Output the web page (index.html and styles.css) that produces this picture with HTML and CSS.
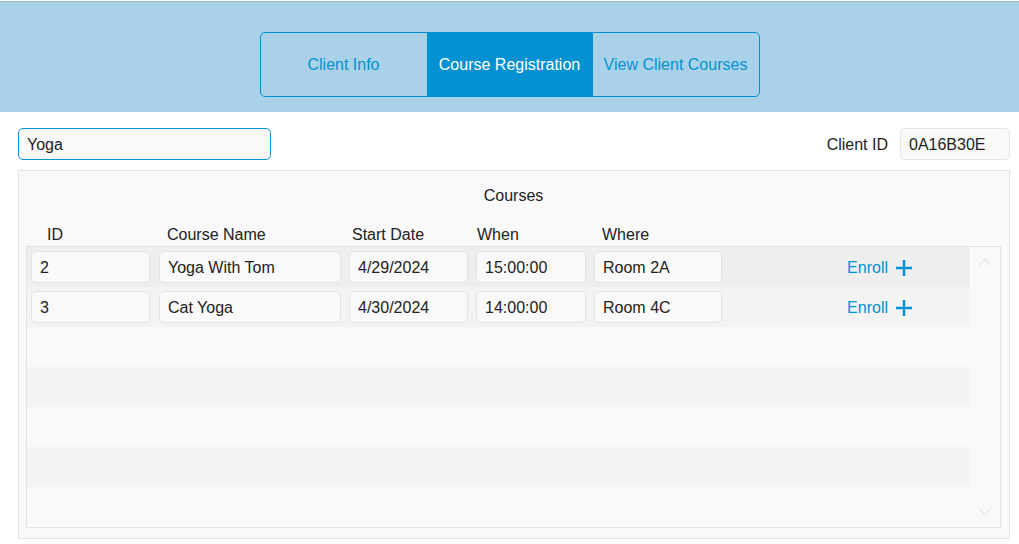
FILE: index.html
```html
<!DOCTYPE html>
<html lang="en">
<head>
<meta charset="utf-8">
<meta name="viewport" content="width=device-width, initial-scale=1">
<title>Course Registration</title>
<link rel="stylesheet" href="styles.css">
</head>
<body>
<header class="topbar">
  <nav class="tabs" aria-label="Sections">
    <button class="tab" type="button">Client Info</button>
    <button class="tab tab-active" type="button" aria-current="page">Course Registration</button>
    <button class="tab" type="button">View Client Courses</button>
  </nav>
</header>
<main class="content">
  <div class="toolbar">
    <input class="field search" type="text" value="Yoga" aria-label="Search courses">
    <div class="client">
      <label class="client-label" for="client-id">Client ID</label>
      <input class="field client-id" id="client-id" type="text" value="0A16B30E" readonly>
    </div>
  </div>
  <section class="panel">
    <h1 class="panel-title">Courses</h1>
    <div class="portal">
      <table class="courses">
        <thead class="head">
          <tr class="row head-row">
            <th class="label label-id">ID</th>
            <th class="label label-name">Course Name</th>
            <th class="label label-date">Start Date</th>
            <th class="label label-when">When</th>
            <th class="label label-name">Where</th>
            <th class="label"></th>
          </tr>
        </thead>
        <tbody class="body">
          <tr class="row row-current">
            <td><input class="field" type="text" value="2" aria-label="ID" readonly></td>
            <td><input class="field" type="text" value="Yoga With Tom" aria-label="Course Name" readonly></td>
            <td><input class="field" type="text" value="4/29/2024" aria-label="Start Date" readonly></td>
            <td><input class="field" type="text" value="15:00:00" aria-label="When" readonly></td>
            <td><input class="field" type="text" value="Room 2A" aria-label="Where" readonly></td>
            <td class="action"><button class="enroll" type="button">Enroll<svg class="plus" viewBox="0 0 16 16" aria-hidden="true"><path class="plus-edge" d="M8 0V16M0 8H16"/><path d="M8 0V16M0 8H16"/></svg></button></td>
          </tr>
          <tr class="row row-alt">
            <td><input class="field" type="text" value="3" aria-label="ID" readonly></td>
            <td><input class="field" type="text" value="Cat Yoga" aria-label="Course Name" readonly></td>
            <td><input class="field" type="text" value="4/30/2024" aria-label="Start Date" readonly></td>
            <td><input class="field" type="text" value="14:00:00" aria-label="When" readonly></td>
            <td><input class="field" type="text" value="Room 4C" aria-label="Where" readonly></td>
            <td class="action"><button class="enroll" type="button">Enroll<svg class="plus" viewBox="0 0 16 16" aria-hidden="true"><path class="plus-edge" d="M8 0V16M0 8H16"/><path d="M8 0V16M0 8H16"/></svg></button></td>
          </tr>
          <tr class="row"></tr>
          <tr class="row row-alt"></tr>
          <tr class="row"></tr>
          <tr class="row row-alt"></tr>
          <tr class="row"></tr>
        </tbody>
      </table>
      <div class="scroll">
        <button class="arrow" type="button" aria-label="Scroll up"><svg viewBox="0 0 12 8" width="12" height="8"><path d="M0.5 7L6 1.5L11.5 7"/></svg></button>
        <button class="arrow" type="button" aria-label="Scroll down"><svg viewBox="0 0 12 8" width="12" height="8"><path d="M0.5 1L6 6.5L11.5 1"/></svg></button>
      </div>
    </div>
  </section>
</main>
</body>
</html>
```
FILE: styles.css
```css
* {
  box-sizing: border-box;
}

body {
  margin: 0;
  background: #fff;
  color: #222;
  font: 16px/24px "Liberation Sans", Arial, sans-serif;
}

button,
input {
  font: inherit;
}

button {
  padding: 0;
  border: 0;
  background: none;
  cursor: pointer;
}

.topbar {
  display: flex;
  justify-content: center;
  margin-top: 1px;
  padding: 30px 16px 15px;
  border-top: 1px solid #a3b8c1;
  background: #a9d2e8;
}

.tabs {
  display: grid;
  grid-template-columns: repeat(3, 1fr);
  flex: 0 1 500px;
  overflow: hidden;
  border: 1px solid #0491d1;
  border-radius: 5px;
}

.tab {
  padding: 20px 0 19px;
  color: #0491d1;
}

.tab-active {
  background: #0491d1;
  color: #fff;
}

.content {
  padding: 16px 9px 5px 18px;
}

.toolbar {
  display: flex;
  justify-content: space-between;
  margin-bottom: 10px;
}

.client {
  display: flex;
  align-items: center;
  gap: 12px;
}

.client-label {
  padding-top: 2px;
}

.field {
  display: block;
  width: 100%;
  min-width: 0;
  height: 32px;
  padding: 2px 8px 0;
  border: 1px solid #e4e4e4;
  border-radius: 5px;
  outline: 0;
  background: #f9f9f9;
  color: #222;
}

.search {
  width: 253px;
  border-color: #0491d1;
}

.client-id {
  width: 110px;
}

.panel {
  padding: 13px 8px 10px 7px;
  border: 1px solid #e3e3e3;
  background: #f9f9f9;
}

.panel-title {
  margin: 0 0 14px;
  font-size: 16px;
  font-weight: 400;
  text-align: center;
}

.portal {
  display: grid;
  grid-template-columns: 1fr 31px;
}

.courses,
.head,
.body {
  display: block;
}

.body {
  border: 1px solid #e3e3e3;
  border-right: 0;
}

.row {
  display: grid;
  grid-template-columns: 120fr 182fr 119fr 110fr 128fr 240fr;
  gap: 8px;
  height: 40px;
  padding: 4px 0 4px 4px;
}

.head-row {
  height: 24px;
  padding: 0 0 0 5px;
}

.row-current {
  background: #eee;
}

.row-alt {
  background: #f3f3f3;
}

.row td {
  padding: 0;
}

.row td:first-child {
  padding-right: 1px;
}

.label {
  padding: 0;
  font-weight: 400;
  line-height: 26px;
  text-align: left;
  white-space: nowrap;
}

.label-id {
  padding-left: 16px;
}

.label-name {
  padding-left: 8px;
}

.label-date {
  padding-left: 3px;
}

.label-when {
  padding-left: 1px;
}

.row .action {
  display: flex;
  justify-content: flex-end;
  padding: 2px 58px 0 0;
}

.enroll {
  display: flex;
  align-items: center;
  gap: 8px;
  color: #0491d1;
}

.plus {
  width: 16px;
  height: 16px;
  fill: none;
  stroke: #0491d1;
  stroke-width: 2;
}

.plus-edge {
  stroke-width: 4;
  stroke-opacity: 0.25;
}

.scroll {
  display: flex;
  flex-direction: column;
  justify-content: space-between;
  align-items: center;
  margin-top: 24px;
  padding: 11px 0;
  border: 1px solid #e3e3e3;
  border-left: 0;
}

.arrow {
  display: block;
  height: 8px;
}

.arrow svg {
  display: block;
  fill: none;
  stroke: #e6e6e6;
  stroke-width: 1.5;
}
```
